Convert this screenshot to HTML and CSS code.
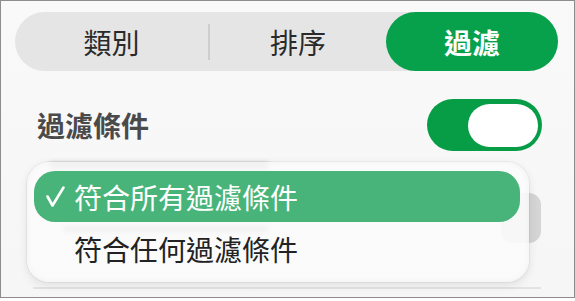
FILE: index.html
```html
<!DOCTYPE html>
<html lang="zh-Hant">
<head>
<meta charset="utf-8">
<link rel="stylesheet" href="styles.css">
</head>
<body>
<div class="frame">
  <div class="seg">
    <div class="seg-item first">類別</div>
    <div class="seg-divider"></div>
    <div class="seg-item second">排序</div>
    <div class="seg-item selected">過濾</div>
  </div>

  <div class="filter-row">
    <div class="filter-label">過濾條件</div>
    <div class="toggle"><div class="knob"></div></div>
  </div>

  <div class="lower">
    <div class="under">
      <div class="ghost-bar top-bar"></div>
      <div class="under-row">
        <div class="ghost-bar mid-bar"></div>
        <div class="under-btn"></div>
      </div>
    </div>
    <div class="menu">
      <div class="opt selected-opt">
        <svg class="check" width="20" height="22" viewBox="0 0 20 22">
          <path d="M1.5 10.5 L6.5 19.5 L17.5 1.5" fill="none" stroke="#ffffff" stroke-width="2.6" stroke-linecap="round" stroke-linejoin="round"/>
        </svg>
        <span class="opt-text">符合所有過濾條件</span>
      </div>
      <div class="opt">
        <span class="opt-text plain">符合任何過濾條件</span>
      </div>
    </div>
  </div>
  <div class="line"></div>
</div>
</body>
</html>
```
FILE: styles.css
```css
html, body {
  margin: 0;
  padding: 0;
  background: #ffffff;
}
body {
  font-family: "Noto Sans CJK TC", "Noto Sans", sans-serif;
}
.frame {
  width: 575px;
  height: 298px;
  box-sizing: border-box;
  border: 1px solid #8d8d8d;
  background: linear-gradient(#f9f9f9, #f6f6f6);
  padding: 11px 0 0 14px;
  overflow: hidden;
}
.seg {
  width: 543px;
  height: 59px;
  border-radius: 30px;
  background: #e5e5e5;
  display: flex;
  align-items: center;
}
.seg-item {
  height: 59px;
  display: flex;
  align-items: center;
  justify-content: center;
  font-size: 28px;
  line-height: 1;
  color: #2a2a2a;
}
.seg-item.first { width: 193px; }
.seg-divider {
  width: 2px;
  height: 36px;
  background: #cdcdcd;
}
.seg-item.second { width: 176px; }
.seg-item.selected {
  width: 172px;
  border-radius: 30px;
  background: #07a14b;
  color: #ffffff;
  font-weight: 700;
}
.filter-row {
  width: 543px;
  margin-top: 28px;
  height: 52px;
  display: flex;
  align-items: center;
  justify-content: space-between;
}
.filter-label {
  margin-left: 22px;
  font-size: 28px;
  line-height: 1;
  font-weight: 700;
  color: #4a4a4a;
}
.toggle {
  margin-right: 16px;
  width: 115px;
  height: 52px;
  box-sizing: border-box;
  border-radius: 26px;
  background: #079d47;
  padding: 4px 4px 4px 0;
  display: flex;
  align-items: center;
  justify-content: flex-end;
}
.knob {
  width: 70px;
  height: 43px;
  border-radius: 22px;
  background: #ffffff;
}
.lower {
  position: relative;
  margin-top: 11px;
  width: 543px;
  height: 125px;
}
.under {
  display: flex;
  flex-direction: column;
}
.ghost-bar {
  background: rgba(0, 0, 0, 0.35);
  border-radius: 3px;
  filter: blur(2px);
}
.top-bar {
  margin: 1px 0 0 34px;
  width: 220px;
  height: 6px;
}
.under-row {
  margin-top: 24px;
  display: flex;
  justify-content: space-between;
  align-items: flex-start;
  padding-right: 17px;
}
.mid-bar {
  margin: 33px 0 0 48px;
  width: 205px;
  height: 6px;
}
.under-btn {
  width: 40px;
  height: 50px;
  border-radius: 12px;
  background: #d5d5d5;
}
.menu {
  position: absolute;
  left: 12px;
  top: 0;
  width: 502px;
  height: 120px;
  box-sizing: border-box;
  border-radius: 22px;
  background: rgba(251, 251, 251, 0.9);
  box-shadow: 0 0 0 1px rgba(0, 0, 0, 0.04), 0 3px 10px rgba(0, 0, 0, 0.10), inset 0 0 6px rgba(0, 0, 0, 0.04);
  padding: 9px 9px 0 7px;
  display: flex;
  flex-direction: column;
}
.opt {
  height: 53px;
  display: flex;
  align-items: center;
  padding-left: 40px;
}
.selected-opt {
  height: 51px;
  border-radius: 21px;
  background: #48b47a;
  padding-left: 12px;
}
.check {
  margin-right: 8px;
  margin-top: 1px;
}
.opt-text {
  font-size: 28px;
  line-height: 1;
  color: #ffffff;
}
.opt-text.plain {
  color: #222222;
}
.line {
  margin-left: 18px;
  width: 508px;
  height: 2px;
  background: #e3e3e3;
}
```
